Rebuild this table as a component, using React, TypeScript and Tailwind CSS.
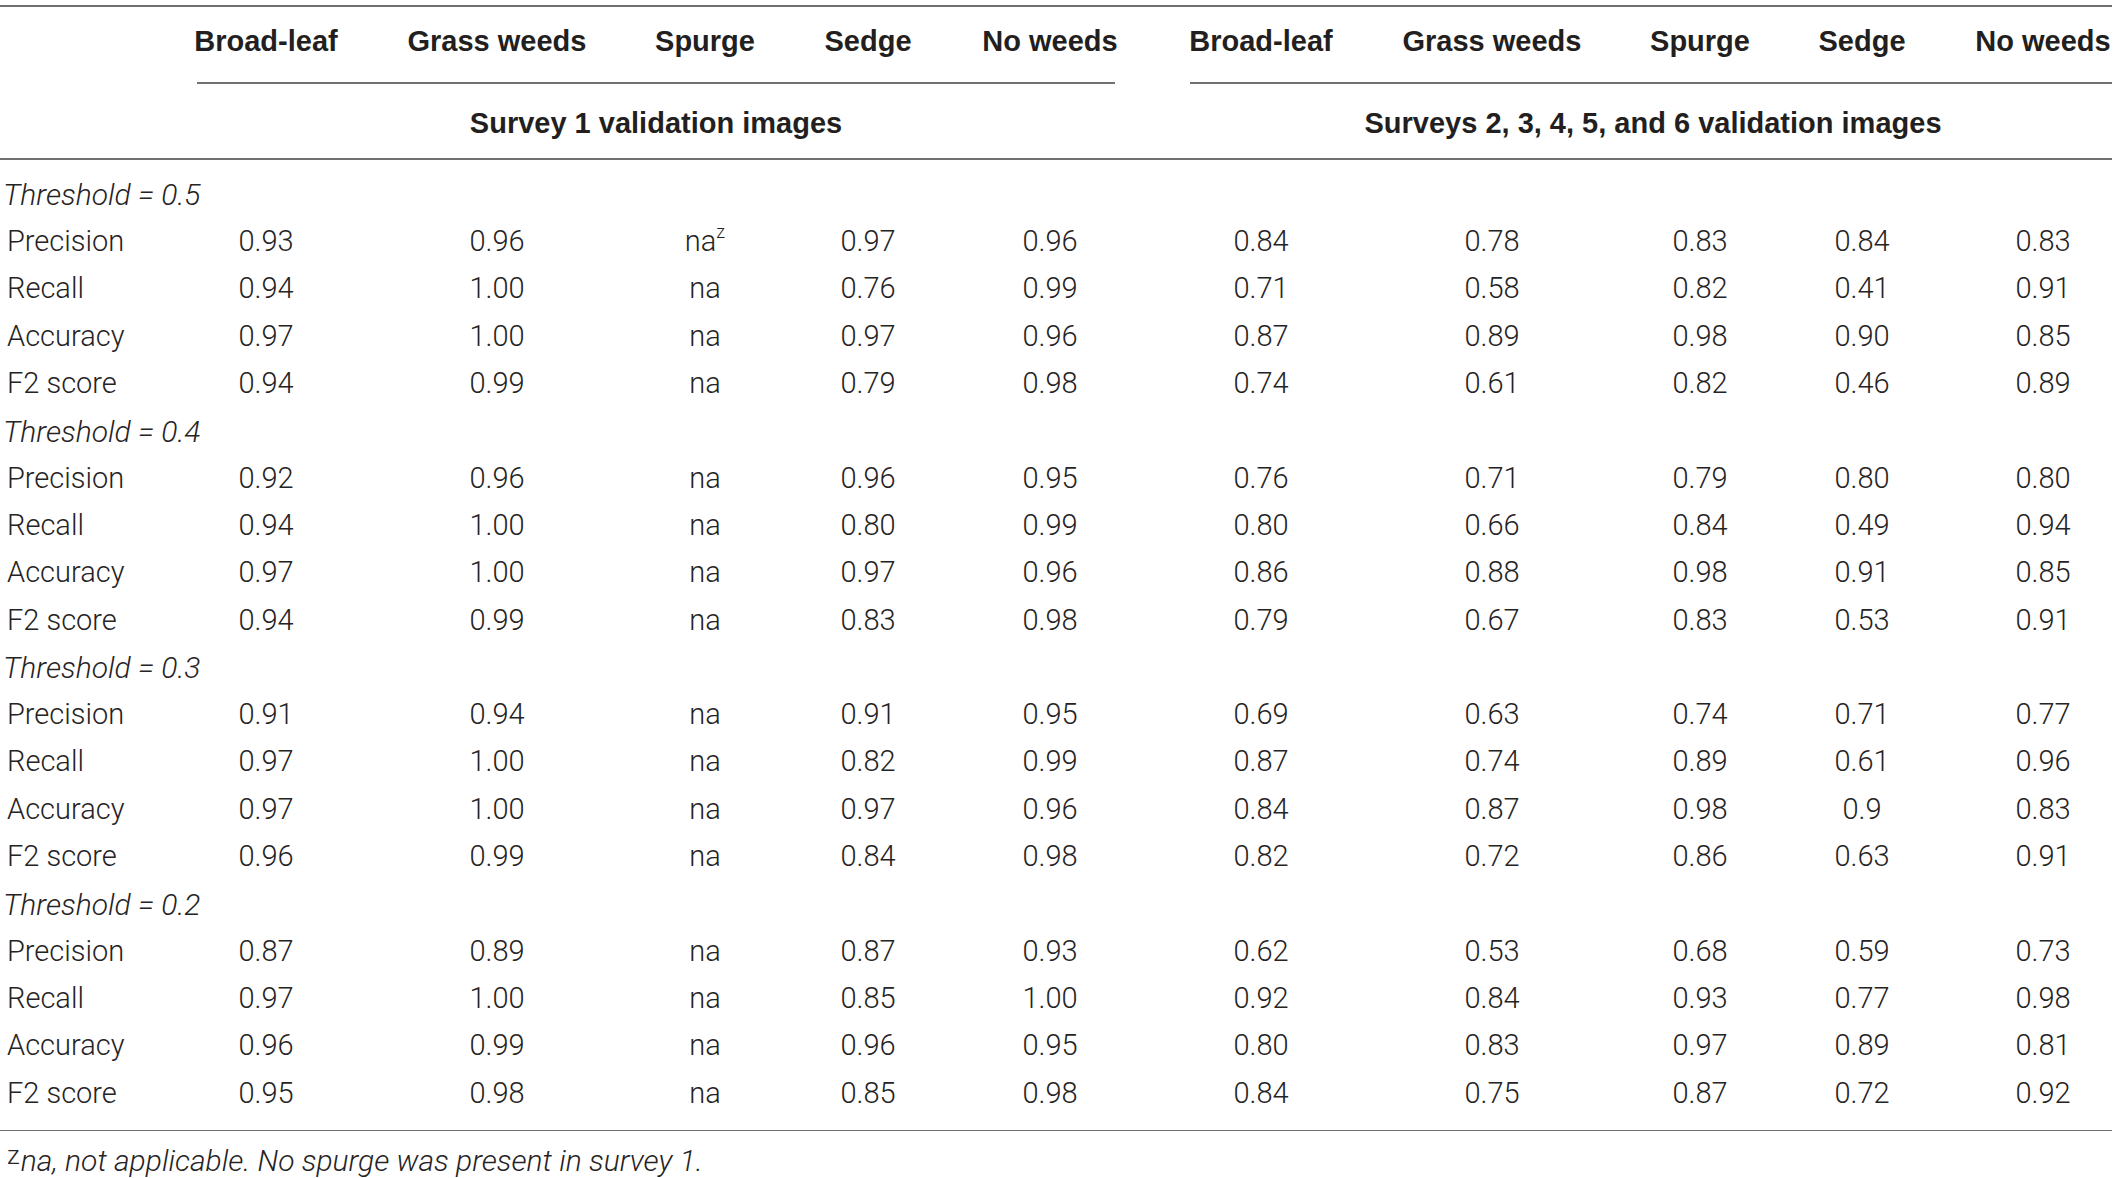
import React from 'react';

type Row = { label: string; values: string[] };
type Block = { threshold: string; rows: Row[] };

const headers = ['Broad-leaf', 'Grass weeds', 'Spurge', 'Sedge', 'No weeds'];

const blocks: Block[] = [
  {
    threshold: '0.5',
    rows: [
      { label: 'Precision', values: ['0.93', '0.96', 'na*', '0.97', '0.96', '0.84', '0.78', '0.83', '0.84', '0.83'] },
      { label: 'Recall', values: ['0.94', '1.00', 'na', '0.76', '0.99', '0.71', '0.58', '0.82', '0.41', '0.91'] },
      { label: 'Accuracy', values: ['0.97', '1.00', 'na', '0.97', '0.96', '0.87', '0.89', '0.98', '0.90', '0.85'] },
      { label: 'F2 score', values: ['0.94', '0.99', 'na', '0.79', '0.98', '0.74', '0.61', '0.82', '0.46', '0.89'] },
    ],
  },
  {
    threshold: '0.4',
    rows: [
      { label: 'Precision', values: ['0.92', '0.96', 'na', '0.96', '0.95', '0.76', '0.71', '0.79', '0.80', '0.80'] },
      { label: 'Recall', values: ['0.94', '1.00', 'na', '0.80', '0.99', '0.80', '0.66', '0.84', '0.49', '0.94'] },
      { label: 'Accuracy', values: ['0.97', '1.00', 'na', '0.97', '0.96', '0.86', '0.88', '0.98', '0.91', '0.85'] },
      { label: 'F2 score', values: ['0.94', '0.99', 'na', '0.83', '0.98', '0.79', '0.67', '0.83', '0.53', '0.91'] },
    ],
  },
  {
    threshold: '0.3',
    rows: [
      { label: 'Precision', values: ['0.91', '0.94', 'na', '0.91', '0.95', '0.69', '0.63', '0.74', '0.71', '0.77'] },
      { label: 'Recall', values: ['0.97', '1.00', 'na', '0.82', '0.99', '0.87', '0.74', '0.89', '0.61', '0.96'] },
      { label: 'Accuracy', values: ['0.97', '1.00', 'na', '0.97', '0.96', '0.84', '0.87', '0.98', '0.9', '0.83'] },
      { label: 'F2 score', values: ['0.96', '0.99', 'na', '0.84', '0.98', '0.82', '0.72', '0.86', '0.63', '0.91'] },
    ],
  },
  {
    threshold: '0.2',
    rows: [
      { label: 'Precision', values: ['0.87', '0.89', 'na', '0.87', '0.93', '0.62', '0.53', '0.68', '0.59', '0.73'] },
      { label: 'Recall', values: ['0.97', '1.00', 'na', '0.85', '1.00', '0.92', '0.84', '0.93', '0.77', '0.98'] },
      { label: 'Accuracy', values: ['0.96', '0.99', 'na', '0.96', '0.95', '0.80', '0.83', '0.97', '0.89', '0.81'] },
      { label: 'F2 score', values: ['0.95', '0.98', 'na', '0.85', '0.98', '0.84', '0.75', '0.87', '0.72', '0.92'] },
    ],
  },
];

// label column + 10 value columns, text centred in each
const grid =
  'grid grid-cols-[140px_252px_210px_206px_120px_244px_178px_284px_132px_192px_170px]';

const boldFont = { fontFamily: '"Liberation Sans", Arial, sans-serif' };

function Cell({ v }: { v: string }) {
  if (v === 'na*') {
    return (
      <div className="flex items-center justify-center">
        na<sup className="text-[18px] -top-[10px]">z</sup>
      </div>
    );
  }
  return <div className="flex items-center justify-center">{v}</div>;
}

export default function App() {
  return (
    <div
      className="w-[2119px] h-[1178px] overflow-hidden bg-white text-[#262324]"
      style={{ fontFamily: 'Roboto, "Liberation Sans", sans-serif' }}
    >
      <div className="w-[2128px] pt-[5px]">
        <div className="w-[2112px] h-[1.5px] bg-[#707070]" />

        {/* column headers */}
        <div
          className={`${grid} h-[69px] items-center text-[29px] font-bold text-[#231f20] pt-[2px]`}
          style={boldFont}
        >
          <div />
          {[...headers, ...headers].map((h, i) => (
            <div key={i} className="text-center whitespace-nowrap">
              {h}
            </div>
          ))}
        </div>

        {/* group rules */}
        <div className="flex w-[2112px] pt-[6.5px]">
          <div className="ml-[197px] w-[918px] h-[1.5px] bg-[#707070]" />
          <div className="ml-[75px] flex-1 h-[1.5px] bg-[#707070]" />
        </div>

        <div
          className={`${grid} h-[74.5px] items-center text-[29px] font-bold text-[#231f20] pt-[5px]`}
          style={boldFont}
        >
          <div />
          <div className="col-span-5 text-center">Survey 1 validation images</div>
          <div className="col-span-5 text-center pl-[22px] pr-[16px] whitespace-nowrap">
            Surveys 2, 3, 4, 5, and 6 validation images
          </div>
        </div>

        <div className="w-[2112px] h-[1.5px] bg-[#707070]" />

        <div className="pt-[11.5px] text-[29px] font-light">
          {blocks.map((b) => (
            <div key={b.threshold}>
              <div className="h-[47.3px] flex items-center pl-[3px] italic whitespace-nowrap text-[30px]">
                Threshold = {b.threshold}
              </div>
              {b.rows.map((r) => (
                <div key={r.label} className={`${grid} h-[47.3px] items-center`}>
                  <div className="pl-[7px] whitespace-nowrap">{r.label}</div>
                  {r.values.map((v, i) => (
                    <Cell key={i} v={v} />
                  ))}
                </div>
              ))}
            </div>
          ))}
        </div>

        <div className="mt-[13px] w-[2112px] h-[1.5px] bg-[#707070]" />

        <div className="pl-[7px] pt-[5px] text-[30px] font-light whitespace-nowrap">
          <span className="text-[26px] align-[7px] mr-[1px]">z</span>
          <span className="italic">na, not applicable. No spurge was present in survey 1.</span>
        </div>
      </div>
    </div>
  );
}
